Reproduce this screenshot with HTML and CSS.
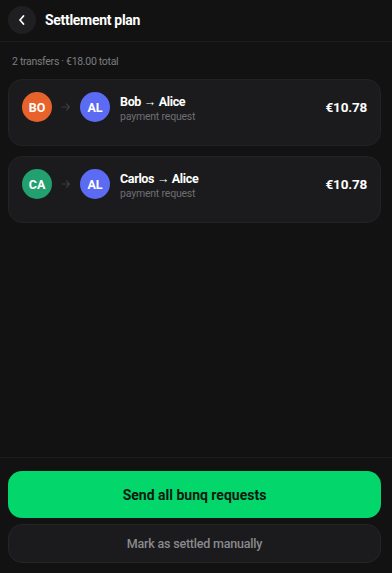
FILE: index.html
```html
<!DOCTYPE html>
<html lang="en">
<head>
<meta charset="utf-8">
<title>Settlement plan</title>
<link rel="stylesheet" href="styles.css">
</head>
<body>
<div class="app">
  <header class="header">
    <button class="back" aria-label="Back">
      <svg width="10" height="12" viewBox="0 0 10 12"><path d="M6.5 2 L3 6 L6.5 10" fill="none" stroke="#fff" stroke-width="1.8" stroke-linecap="round" stroke-linejoin="round"/></svg>
    </button>
    <h1 class="title">Settlement plan</h1>
  </header>
  <main class="content">
    <p class="summary">2 transfers · €18.00 total</p>
    <div class="card">
      <div class="avatars">
        <span class="avatar orange">BO</span>
        <svg class="arrow" width="10" height="10" viewBox="0 0 10 10"><path d="M1 5 H8.5 M5.5 2 L8.5 5 L5.5 8" fill="none" stroke="#3a3a3c" stroke-width="1.2" stroke-linecap="round" stroke-linejoin="round"/></svg>
        <span class="avatar blue">AL</span>
      </div>
      <div class="info">
        <div class="name">Bob <span class="to">→</span> Alice</div>
        <div class="sub">payment request</div>
      </div>
      <div class="amount">€10.78</div>
    </div>
    <div class="card">
      <div class="avatars">
        <span class="avatar green">CA</span>
        <svg class="arrow" width="10" height="10" viewBox="0 0 10 10"><path d="M1 5 H8.5 M5.5 2 L8.5 5 L5.5 8" fill="none" stroke="#3a3a3c" stroke-width="1.2" stroke-linecap="round" stroke-linejoin="round"/></svg>
        <span class="avatar blue">AL</span>
      </div>
      <div class="info">
        <div class="name">Carlos <span class="to">→</span> Alice</div>
        <div class="sub">payment request</div>
      </div>
      <div class="amount">€10.78</div>
    </div>
  </main>
  <footer class="footer">
    <button class="btn primary">Send all bunq requests</button>
    <button class="btn secondary">Mark as settled manually</button>
  </footer>
</div>
</body>
</html>
```

FILE: styles.css
```css
* { box-sizing: border-box; }
html, body { margin: 0; padding: 0; }
body {
  background: #121212;
  color: #fff;
  font-family: Roboto, "Open Sans", sans-serif;
  width: 392px;
  height: 573px;
  overflow: hidden;
}
.app {
  display: flex;
  flex-direction: column;
  height: 573px;
}
.header {
  display: flex;
  align-items: center;
  gap: 9px;
  padding: 6px 8px 7px;
  border-bottom: 1px solid #1d1d1f;
}
.back {
  width: 28px;
  height: 28px;
  border-radius: 50%;
  border: none;
  background: #1f1f21;
  display: flex;
  align-items: center;
  justify-content: center;
  padding: 0;
}
.title {
  margin: 0;
  font-size: 14px;
  font-weight: 700;
  letter-spacing: -0.3px;
}
.content {
  flex: 1;
  padding: 12px 11px 0 8px;
  display: flex;
  flex-direction: column;
  gap: 10px;
}
.summary {
  margin: 0 0 -1px 4px;
  font-size: 10.5px;
  line-height: 16px;
  letter-spacing: -0.3px;
  color: #7c7c80;
}
.card {
  display: flex;
  align-items: center;
  background: #1b1b1d;
  border: 1px solid #232325;
  border-radius: 14px;
  padding: 12px 13px 23px;
}
.avatars {
  display: flex;
  align-items: center;
}
.avatar {
  width: 30px;
  height: 30px;
  border-radius: 50%;
  display: flex;
  align-items: center;
  justify-content: center;
  font-size: 12.5px;
  font-weight: 700;
  color: #fff;
}
.orange { background: #e8622c; }
.blue { background: #5b6bf3; }
.green { background: #23a06f; }
.arrow { margin: 0 9px 0 9px; }
.info {
  flex: 1;
  margin: 2px 0 -2px 10px;
  display: flex;
  flex-direction: column;
}
.name {
  font-size: 12.5px;
  font-weight: 700;
  line-height: 16px;
  letter-spacing: -0.35px;
}
.to { font-weight: 400; }
.sub {
  font-size: 10.5px;
  line-height: 14px;
  letter-spacing: -0.2px;
  color: #6e6e72;
}
.amount {
  font-size: 13.5px;
  font-weight: 700;
  letter-spacing: -0.2px;
}
.footer {
  border-top: 1px solid #1d1d1f;
  padding: 13px 11px 10px 8px;
  display: flex;
  flex-direction: column;
  gap: 6px;
}
.btn {
  font-family: inherit;
  border-radius: 14px;
  width: 100%;
}
.primary {
  height: 47px;
  background: #03d66b;
  border: none;
  color: #0c1a10;
  font-size: 14px;
  font-weight: 700;
}
.secondary {
  height: 39px;
  background: #1b1b1d;
  border: 1px solid #252527;
  color: #8a8a8e;
  font-size: 12.5px;
  font-weight: 500;
  letter-spacing: -0.2px;
}
```
